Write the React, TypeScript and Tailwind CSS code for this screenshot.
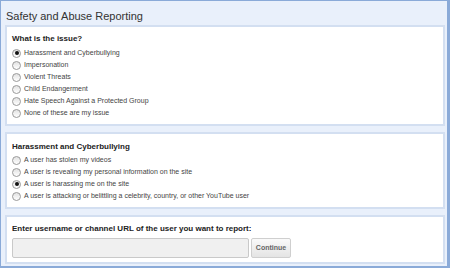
import { useState } from 'react'

const ISSUES = [
  'Harassment and Cyberbullying',
  'Impersonation',
  'Violent Threats',
  'Child Endangerment',
  'Hate Speech Against a Protected Group',
  'None of these are my issue',
]

const SUBISSUES = [
  'A user has stolen my videos',
  'A user is revealing my personal information on the site',
  'A user is harassing me on the site',
  'A user is attacking or belittling a celebrity, country, or other YouTube user',
]

function Radio({ checked }: { checked: boolean }) {
  return (
    <span className="flex h-[9px] w-[9px] shrink-0 items-center justify-center rounded-full border border-[#9a9a9a] bg-gradient-to-b from-[#e2e2e2] to-white">
      {checked && <span className="h-[4px] w-[4px] rounded-full bg-[#111]" />}
    </span>
  )
}

function RadioList({ items, selected, onPick }: { items: string[]; selected: number; onPick: (i: number) => void }) {
  return (
    <div className="flex flex-col">
      {items.map((label, i) => (
        <div key={label} className="flex h-[12px] cursor-pointer items-center gap-[3px]" onClick={() => onPick(i)}>
          <Radio checked={i === selected} />
          <span className="text-[7px] leading-[10px] text-[#444]">{label}</span>
        </div>
      ))}
    </div>
  )
}

export default function App() {
  const [issue, setIssue] = useState(0)
  const [sub, setSub] = useState(2)

  return (
    <div
      className="flex h-[268px] w-[450px] flex-col border-t border-l border-r-[3px] border-b-[2px] border-[#8aaad8] bg-[#e9f0fb] pl-[4px] pr-[2px]"
      style={{ fontFamily: '"Liberation Sans", Arial, sans-serif' }}
    >
      {/* Title */}
      <div className="h-[24px] pt-[8px] pl-[1px] text-[11px] leading-[14px] text-[#333]">Safety and Abuse Reporting</div>

      {/* Issue */}
      <div className="h-[101px] border-2 border-[#d3dff1] bg-white px-[5px] pt-[7px]">
        <div className="text-[8px] font-bold leading-[10px] text-[#222]">What is the issue?</div>
        <div className="mt-[3px]">
          <RadioList items={ISSUES} selected={issue} onPick={setIssue} />
        </div>
      </div>

      {/* Sub issue */}
      <div className="mt-[6px] h-[77px] border-2 border-[#d3dff1] bg-white px-[5px] pt-[8px]">
        <div className="text-[8px] font-bold leading-[10px] text-[#222]">Harassment and Cyberbullying</div>
        <div className="mt-[2px]">
          <RadioList items={SUBISSUES} selected={sub} onPick={setSub} />
        </div>
      </div>

      {/* User */}
      <div className="mt-[6px] h-[49px] border-2 border-[#d3dff1] bg-white px-[5px] pt-[7px]">
        <div className="text-[8px] font-bold leading-[10px] text-[#222]">
          Enter username or channel URL of the user you want to report:
        </div>
        <div className="mt-[4px] flex gap-[2px]">
          <input className="h-[20px] w-[237px] rounded-[2px] border border-[#c9c9c9] bg-[#f0f0f0] px-1 text-[8px] outline-none" />
          <button className="h-[20px] w-[40px] rounded-[2px] border border-[#cfcfcf] bg-gradient-to-b from-[#fafafa] to-[#e4e4e4] text-[7px] font-bold text-[#666]">
            Continue
          </button>
        </div>
      </div>
    </div>
  )
}
